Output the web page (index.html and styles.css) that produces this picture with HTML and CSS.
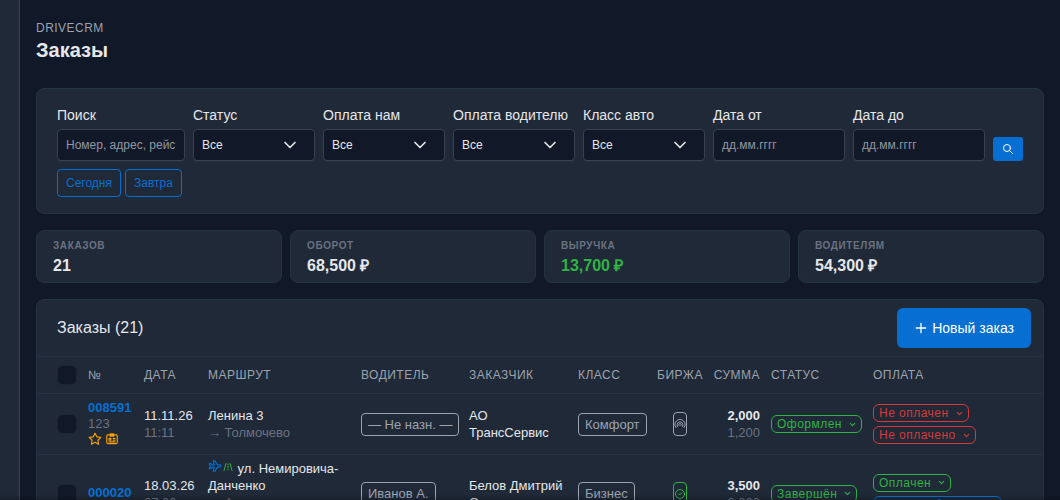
FILE: index.html
```html
<!DOCTYPE html>
<html lang="ru">
	<head>
		<meta charset="utf-8">
		<meta name="viewport" content="width=device-width, initial-scale=1">
		<title>Заказы</title>
		<link rel="stylesheet" href="styles.css">
	</head>
	<body>
		<svg class="sprite" aria-hidden="true">
			<symbol id="i-search" viewBox="0 0 24 24"><circle cx="10" cy="10" r="7"/><path d="M21 21l-6-6"/></symbol>
			<symbol id="i-plus" viewBox="0 0 24 24"><path d="M12 5v14M5 12h14"/></symbol>
			<symbol id="i-star" viewBox="0 0 24 24"><path d="M12 17.75l-6.172 3.245l1.179-6.873l-5-4.867l6.9-1l3.086-6.253l3.086 6.253l6.9 1l-5 4.867l1.179 6.873z"/></symbol>
			<symbol id="i-badge" viewBox="0 0 24 24"><path d="M5 5h14a2 2 0 0 1 2 2v11a2 2 0 0 1-2 2H5a2 2 0 0 1-2-2V7a2 2 0 0 1 2-2zM9 5V3h6v4H9zM7 11h3v3H7zM14 11h3M14 14h3M7 17h10"/></symbol>
			<symbol id="i-plane" viewBox="0 0 24 24"><path d="M16 10h4a2 2 0 0 1 0 4h-4l-4 7H9l2-7H7l-2 2H2l2-4l-2-4h3l2 2h4L9 3h3z"/></symbol>
			<symbol id="i-road" viewBox="0 0 24 24"><path d="M4 19L8 5M16 5l4 14M12 8V6M12 13v-2M12 18v-2"/></symbol>
			<symbol id="i-radar" viewBox="0 0 24 24"><path d="M4 19a10 10 0 1 1 16 0M7 17a6 6 0 1 1 10 0M10 15a2.500 2.500 0 1 1 4 0"/></symbol>
			<symbol id="i-check" viewBox="0 0 24 24"><circle cx="12" cy="12" r="9"/><path d="M9 12l2 2l4-4"/></symbol>
			<symbol id="i-down" viewBox="0 0 24 24"><path d="M6 9l6 6l6-6"/></symbol>
		</svg>
		<aside class="sidebar"></aside>
		<main class="page">
			<header class="page-header">
				<div class="pretitle">DriveCRM</div>
				<h1>Заказы</h1>
			</header>

			<form class="card filters">
				<div class="field field-search">
					<label for="q">Поиск</label>
					<input type="text" id="q" placeholder="Номер, адрес, рейс">
				</div>
				<div class="field field-select">
					<label for="status">Статус</label>
					<div class="select"><select id="status"><option>Все</option></select><svg class="icon"><use href="#i-down"/></svg></div>
				</div>
				<div class="field field-select">
					<label for="pay_us">Оплата нам</label>
					<div class="select"><select id="pay_us"><option>Все</option></select><svg class="icon"><use href="#i-down"/></svg></div>
				</div>
				<div class="field field-select">
					<label for="pay_driver">Оплата водителю</label>
					<div class="select"><select id="pay_driver"><option>Все</option></select><svg class="icon"><use href="#i-down"/></svg></div>
				</div>
				<div class="field field-select">
					<label for="car_class">Класс авто</label>
					<div class="select"><select id="car_class"><option>Все</option></select><svg class="icon"><use href="#i-down"/></svg></div>
				</div>
				<div class="field field-date">
					<label for="date_from">Дата от</label>
					<input type="text" id="date_from" placeholder="дд.мм.гггг">
				</div>
				<div class="field field-date">
					<label for="date_to">Дата до</label>
					<input type="text" id="date_to" placeholder="дд.мм.гггг">
				</div>
				<button type="submit" class="btn-search" aria-label="Найти"><svg class="icon"><use href="#i-search"/></svg></button>
				<div class="quick">
					<button type="button" class="btn-outline">Сегодня</button>
					<button type="button" class="btn-outline">Завтра</button>
				</div>
			</form>

			<section class="stats">
				<div class="card stat"><div class="stat-label">Заказов</div><div class="stat-value">21</div></div>
				<div class="card stat"><div class="stat-label">Оборот</div><div class="stat-value">68,500 ₽</div></div>
				<div class="card stat"><div class="stat-label">Выручка</div><div class="stat-value green">13,700 ₽</div></div>
				<div class="card stat"><div class="stat-label">Водителям</div><div class="stat-value">54,300 ₽</div></div>
			</section>

			<section class="card orders">
				<div class="orders-header">
					<h2>Заказы (21)</h2>
					<button type="button" class="btn-primary"><svg class="icon"><use href="#i-plus"/></svg>Новый заказ</button>
				</div>
				<table>
					<colgroup>
						<col class="c-check"><col class="c-num"><col class="c-date"><col class="c-route"><col class="c-driver"><col class="c-client">
						<col class="c-class"><col class="c-exch"><col class="c-sum"><col class="c-status"><col>
					</colgroup>
					<thead>
						<tr>
							<th><input type="checkbox" aria-label="Выбрать все"></th>
							<th>№</th>
							<th>Дата</th>
							<th>Маршрут</th>
							<th>Водитель</th>
							<th>Заказчик</th>
							<th>Класс</th>
							<th class="center">Биржа</th>
							<th class="end">Сумма</th>
							<th>Статус</th>
							<th>Оплата</th>
						</tr>
					</thead>
					<tbody>
						<tr>
							<td><input type="checkbox" aria-label="Заказ 008591"></td>
							<td class="num">
								<a href="#">008591</a>
								<div class="muted">123</div>
								<div class="marks"><svg class="icon"><use href="#i-star"/></svg><svg class="icon"><use href="#i-badge"/></svg></div>
							</td>
							<td><div>11.11.26</div><div class="muted">11:11</div></td>
							<td><div>Ленина 3</div><div class="muted">→ Толмочево</div></td>
							<td><span class="tag">— Не назн. —</span></td>
							<td>АО ТрансСервис</td>
							<td><span class="tag">Комфорт</span></td>
							<td class="center"><span class="exch"><svg class="icon"><use href="#i-radar"/></svg></span></td>
							<td class="end"><b>2,000</b><div class="muted">1,200</div></td>
							<td><button type="button" class="pill green">Оформлен<svg class="icon"><use href="#i-down"/></svg></button></td>
							<td class="pays">
								<button type="button" class="pill red">Не оплачен<svg class="icon"><use href="#i-down"/></svg></button>
								<button type="button" class="pill red">Не оплачено<svg class="icon"><use href="#i-down"/></svg></button>
							</td>
						</tr>
						<tr>
							<td><input type="checkbox" aria-label="Заказ 000020"></td>
							<td class="num"><a href="#">000020</a></td>
							<td><div>18.03.26</div><div class="muted">07:00</div></td>
							<td class="route">
								<div><svg class="icon plane blue"><use href="#i-plane"/></svg><svg class="icon green"><use href="#i-road"/></svg> ул. Немировича-Данченко</div>
								<div class="muted">→ Аэропорт Толмачёво</div>
							</td>
							<td><span class="tag">Иванов А.</span></td>
							<td>Белов Дмитрий Олег</td>
							<td><span class="tag">Бизнес</span></td>
							<td class="center"><span class="exch green"><svg class="icon"><use href="#i-check"/></svg></span></td>
							<td class="end"><b>3,500</b><div class="muted">2,800</div></td>
							<td><button type="button" class="pill green">Завершён<svg class="icon"><use href="#i-down"/></svg></button></td>
							<td class="pays">
								<button type="button" class="pill green">Оплачен<svg class="icon"><use href="#i-down"/></svg></button>
								<button type="button" class="pill blue">Отдал работнику<svg class="icon"><use href="#i-down"/></svg></button>
							</td>
						</tr>
					</tbody>
				</table>
			</section>
		</main>
	</body>
</html>
```
FILE: styles.css
```css
* {
	box-sizing: border-box;
}
body {
	display: flex;
	height: 100vh;
	margin: 0;
	overflow: hidden;
	background: #111827;
	color: #e5e7eb;
	font: 14px/20px "Liberation Sans", Arial, sans-serif;
}
/* soft edge along the bottom of the window */
body:after {
	content: "";
	position: fixed;
	right: 0;
	bottom: 0;
	left: 0;
	height: 5px;
	background: linear-gradient(rgba(0, 0, 0, 0), rgba(0, 0, 0, 0.2));
	pointer-events: none;
}
input, select, button {
	font: inherit;
}
.sprite {
	position: absolute;
	width: 0;
	height: 0;
}
.icon {
	width: 12px;
	height: 12px;
	fill: none;
	stroke: currentColor;
	stroke-width: 2;
	stroke-linecap: round;
	stroke-linejoin: round;
	flex: none;
}
.sidebar {
	flex: none;
	width: 20px;
	background: #1f2937;
	border-right: 1px solid #374151;
}
.page {
	flex: 1;
	min-width: 0;
	padding: 20px 16px 0;
}
.page-header {
	margin-bottom: 24px;
}
.pretitle {
	color: #9ca3af;
	font-size: 12px;
	line-height: 16px;
	letter-spacing: 0.04em;
	text-transform: uppercase;
}
h1 {
	margin: 0;
	font-size: 20px;
	line-height: 28px;
}
.card {
	background: #1f2937;
	border: 1px solid #243342;
	border-radius: 8px;
}
.filters {
	display: flex;
	flex-wrap: wrap;
	align-items: flex-end;
	gap: 8px;
	margin-bottom: 16px;
	padding: 16px 20px;
}
.field label {
	display: block;
	margin-bottom: 4px;
	white-space: nowrap;
}
.field input, .field select {
	display: block;
	width: 100%;
	height: 32px;
	padding: 0 8px;
	background: #111827;
	border: 1px solid #374151;
	border-radius: 4px;
	box-shadow: 0 1px 1px rgba(55, 65, 81, 0.4);
	color: #e5e7eb;
	font-size: 12px;
	appearance: none;
}
.field input::placeholder {
	color: #9097a3;
	opacity: 1;
}
.field-search {
	width: 128px;
}
.field-select {
	width: 122px;
}
.field-date {
	width: 132px;
}
.select {
	position: relative;
}
.select .icon {
	position: absolute;
	top: 6px;
	right: 15px;
	width: 20px;
	height: 20px;
	pointer-events: none;
}
.btn-search {
	display: flex;
	align-items: center;
	justify-content: center;
	width: 30px;
	height: 24px;
	padding: 0;
	background: #066fd1;
	border: 0;
	border-radius: 3px;
	color: #fff;
}
.quick {
	display: flex;
	flex-basis: 100%;
	gap: 4px;
}
.btn-outline {
	height: 28px;
	padding: 0 8px;
	background: none;
	border: 1px solid #066fd1;
	border-radius: 4px;
	color: #066fd1;
	font-size: 12px;
}
.stats {
	display: grid;
	grid-template-columns: repeat(4, 1fr);
	gap: 8px;
	margin-bottom: 16px;
}
.stat {
	padding: 7px 16px 4px;
}
.stat-label {
	color: #6b7280;
	font-size: 10px;
	font-weight: bold;
	line-height: 16px;
	letter-spacing: 0.06em;
	text-transform: uppercase;
}
.stat-value {
	font-size: 16px;
	font-weight: bold;
	line-height: 24px;
}
.green {
	color: #2fb344;
}
.red {
	color: #d63939;
}
.blue {
	color: #066fd1;
}
.muted {
	color: #6b7280;
}
.orders-header {
	display: flex;
	align-items: center;
	justify-content: space-between;
	height: 56px;
	padding: 0 12px 0 20px;
}
h2 {
	margin: 0;
	font-size: 16px;
	font-weight: normal;
	line-height: 24px;
}
.btn-primary {
	display: flex;
	align-items: center;
	gap: 3px;
	height: 40px;
	padding: 0 17px 0 16px;
	background: #066fd1;
	border: 0;
	border-radius: 6px;
	color: #fff;
}
.btn-primary .icon {
	width: 16px;
	height: 16px;
}
table {
	width: 100%;
	border-collapse: collapse;
	table-layout: fixed;
	font-size: 13px;
	line-height: 17px;
}
.c-check { width: 45px; }
.c-num { width: 56px; }
.c-date { width: 64px; }
.c-route { width: 153px; }
.c-driver { width: 108px; }
.c-client { width: 109px; }
.c-class { width: 79px; }
.c-exch { width: 58px; }
.c-sum { width: 56px; }
.c-status { width: 102px; }
th, td {
	padding: 4px 6px;
	border-top: 1px solid #243342;
	text-align: left;
	vertical-align: middle;
}
th {
	height: 37px;
	color: #9ca3af;
	font-size: 12px;
	font-weight: normal;
	letter-spacing: 0.04em;
	text-transform: uppercase;
	white-space: nowrap;
}
th:first-child, td:first-child {
	padding-left: 20px;
}
tbody tr {
	height: 61px;
}
th.center, td.center {
	text-align: center;
}
th.end, td.end {
	padding-right: 5px;
	padding-left: 0;
	text-align: right;
}
input[type="checkbox"] {
	display: block;
	width: 20px;
	height: 20px;
	margin: 0;
	appearance: none;
	background: #111827;
	border: 1px solid #1b2636;
	border-radius: 6px;
}
.num {
	padding-bottom: 6px;
	line-height: 16px;
}
.num a {
	color: #066fd1;
	font-weight: bold;
	text-decoration: none;
}
.marks {
	display: flex;
	gap: 3px;
	color: #f59f00;
}
.marks .icon {
	width: 14px;
	height: 14px;
}
.route .plane {
	width: 14px;
	height: 14px;
}
.tag {
	display: inline-block;
	padding: 2px 6px;
	border: 1px solid #9ca3af;
	border-radius: 4px;
	color: #9ca3af;
	white-space: nowrap;
}
.exch {
	display: inline-flex;
	align-items: center;
	justify-content: center;
	width: 14px;
	height: 24px;
	border: 1px solid;
	border-radius: 4px;
	vertical-align: middle;
}
.exch:not(.green) {
	color: #9ca3af;
}
.pill {
	display: flex;
	align-items: center;
	gap: 6px;
	height: 18px;
	padding: 0 4px 0 5px;
	background: none;
	border: 1px solid;
	border-radius: 6px;
	font-size: 12px;
	line-height: 16px;
	letter-spacing: 0.04em;
	white-space: nowrap;
}
.pill .icon {
	width: 9px;
	height: 9px;
	stroke-width: 3;
}
.pays .pill + .pill {
	margin-top: 4px;
}
```
